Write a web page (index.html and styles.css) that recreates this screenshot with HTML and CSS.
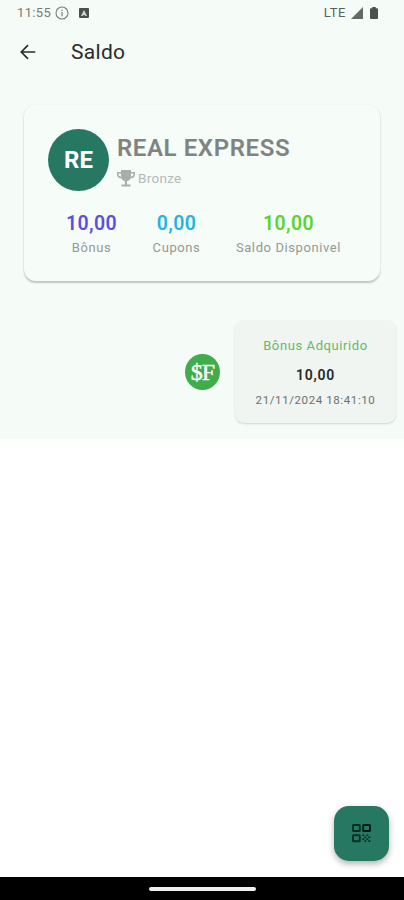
FILE: index.html
```html
<!DOCTYPE html>
<html lang="pt">
<head>
<meta charset="utf-8">
<title>Saldo</title>
<link rel="stylesheet" href="styles.css">
</head>
<body>
<div class="screen">
  <main class="content">
    <div class="status">
      <span class="time">11:55</span>
      <svg class="info" width="14" height="14" viewBox="0 0 14 14" fill="none" stroke="#7b807d"><circle cx="7" cy="7" r="6" stroke-width="1.1"/><path d="M7 6v4.2M7 3.7v1.2" stroke-width="1.2"/></svg>
      <svg class="app" width="10" height="10" viewBox="0 0 10 10"><rect width="10" height="10" rx="1" fill="#4b504d"/><path d="M5 2 8 8H6.600L5 6.700 3.400 8H2z" fill="#d4dad6"/></svg>
      <span class="lte">LTE</span>
      <svg class="signal" width="12" height="12" viewBox="0 0 12 12"><path d="M12 0v12H0z" fill="#646966"/></svg>
      <svg class="battery" width="8" height="12" viewBox="0 0 8 12"><path d="M2.300 0h3.400v1.300H7q1 0 1 1V11q0 1-1 1H1q-1 0-1-1V2.300q0-1 1-1h1.300z" fill="#4c514e"/></svg>
    </div>
    <header class="bar">
      <svg width="16" height="16" viewBox="0 0 16 16" fill="none" stroke="#292d2b" stroke-width="1.7"><path d="M15.300 8H1.700M8 1.200 1.300 8 8 14.800"/></svg>
      <h1 class="title">Saldo</h1>
    </header>
    <section class="card">
      <div class="profile">
        <div class="avatar">RE</div>
        <div class="who">
          <div class="name">REAL EXPRESS</div>
          <div class="tier">
            <svg width="18" height="18" viewBox="0 0 18 18"><path d="M4 1h10v2h4v2.500q0 3.400-4.400 3.900Q12.600 11.600 10 12.300V15.500h3.500V17.500h-9V15.500H8V12.300Q5.400 11.600 4.400 9.400 0 8.900 0 5.500V3h4zM4 4.400H1.500v1.100q0 1.700 2.600 2.300zM14 4.400l-.1 3.400q2.600-.6 2.600-2.300V4.400z" fill="#a9adab" fill-rule="evenodd"/></svg>
            <span>Bronze</span>
          </div>
        </div>
      </div>
      <div class="stats">
        <div class="stat"><b class="value bonus">10,00</b><span>Bônus</span></div>
        <div class="stat"><b class="value coupons">0,00</b><span>Cupons</span></div>
        <div class="stat"><b class="value balance">10,00</b><span>Saldo Disponivel</span></div>
      </div>
    </section>
    <section class="entry">
      <div class="coin">$F</div>
      <div class="bubble">
        <span class="kind">Bônus Adquirido</span>
        <b class="amount">10,00</b>
        <time class="date">21/11/2024 18:41:10</time>
      </div>
    </section>
  </main>
  <div class="space">
    <button class="fab" aria-label="QR">
      <svg width="19" height="19" viewBox="0 0 19 19" fill="none" stroke="#0a2e23" stroke-width="1.9"><rect x="1" y="1" width="6.800" height="6" rx=".6"/><rect x="11.200" y="1" width="6.800" height="6" rx=".6" stroke="#061812"/><rect x="1" y="11.300" width="6.800" height="6" rx=".6"/><path d="M10.300 11.300h2M14.300 11.300h2M12.300 13.200h2M16.300 13.200h2M10.300 15.100h2M14.300 15.100h2M12.300 17.100h2M16.300 17.100h2" stroke-width="1.600"/></svg>
    </button>
  </div>
  <nav class="nav"><div class="handle"></div></nav>
</div>
</body>
</html>
```
FILE: styles.css
```css
* { box-sizing: border-box; }
body { margin: 0; background: #fff; font-family: Roboto, "Liberation Sans", sans-serif; }
.screen { width: 404px; height: 900px; display: flex; flex-direction: column; overflow: hidden; }
.content { height: 439px; background: #f5fbf7; }
.status { height: 25px; padding: 0 26px 0 17px; display: flex; align-items: center; }
.time { font-size: 13px; color: #777c79; letter-spacing: .35px; width: 38px; }
.info { margin-right: 10px; }
.lte { margin-left: auto; margin-right: 5px; font-size: 13px; color: #5b605d; letter-spacing: .6px; }
.signal { margin-right: 7px; }
.bar { height: 54px; padding-left: 20px; display: flex; align-items: center; gap: 35px; }
.title { margin: 0; font-size: 21px; line-height: 25px; font-weight: 400; color: #292d2b; letter-spacing: .3px; }
.card { margin: 26px 24px 0 24px; height: 176px; padding: 24px 24px 0; border-radius: 12px; background: #f6fcf8; box-shadow: 0 1.5px 2px rgba(0,0,0,.2), 0 1px 3px rgba(0,0,0,.05); }
.profile { display: flex; gap: 8px; }
.avatar { width: 61px; height: 62px; border-radius: 50%; background: #277862; color: #fff; display: flex; align-items: center; justify-content: center; font-size: 24px; font-weight: 700; }
.who { padding-top: 5px; }
.name { font-size: 24px; line-height: 29px; font-weight: 600; color: #7f8481; letter-spacing: .6px; white-space: nowrap; }
.tier { margin-top: 6px; display: flex; align-items: center; gap: 3px; font-size: 13.5px; line-height: 18px; color: #b5bab7; letter-spacing: .3px; }
.stats { margin-top: 21px; display: flex; }
.stat { flex: none; display: flex; flex-direction: column; align-items: center; font-size: 13px; line-height: 16px; color: #949996; letter-spacing: .6px; }
.stat:nth-child(1) { width: 87px; }
.stat:nth-child(2) { width: 83px; }
.stat:nth-child(3) { width: 141px; }
.value { font-size: 19.5px; line-height: 24px; margin-bottom: 4px; letter-spacing: .4px; font-weight: 600; }
.bonus { color: #5b4ee2; }
.coupons { color: #23b4e0; }
.balance { color: #5bd52b; }
.entry { margin-top: 39px; padding: 0 8px 0 185px; display: flex; align-items: center; gap: 15px; }
.coin { width: 35px; height: 36px; border-radius: 50%; background: #40ac4c; color: #fff; display: flex; align-items: center; justify-content: center; font: 400 24px/24px "Liberation Serif", serif; letter-spacing: -1px; -webkit-text-stroke: .4px #fff; }
.bubble { flex: 1; height: 103px; padding-top: 17px; border-radius: 9px; background: #f0f5f2; display: flex; flex-direction: column; align-items: center; box-shadow: 0 1px 2px rgba(0,0,0,.15); }
.kind { font-size: 13px; line-height: 18px; color: #65b76d; letter-spacing: .6px; }
.amount { margin-top: 11px; font-size: 14px; line-height: 18px; font-weight: 600; color: #252927; letter-spacing: .7px; }
.date { margin-top: 8px; font-size: 11.5px; line-height: 16px; color: #6b706d; letter-spacing: .6px; }
.space { flex: 1; display: flex; align-items: flex-end; justify-content: flex-end; padding: 0 15px 16px 0; }
.fab { width: 55px; height: 55px; padding: 0; border: 0; border-radius: 15px; background: #277862; display: flex; align-items: center; justify-content: center; box-shadow: 0 3px 6px rgba(0,0,0,.3); }
.nav { height: 23px; background: #000; display: flex; align-items: center; justify-content: center; }
.handle { width: 107px; height: 4px; border-radius: 2px; background: #eee; }
```
